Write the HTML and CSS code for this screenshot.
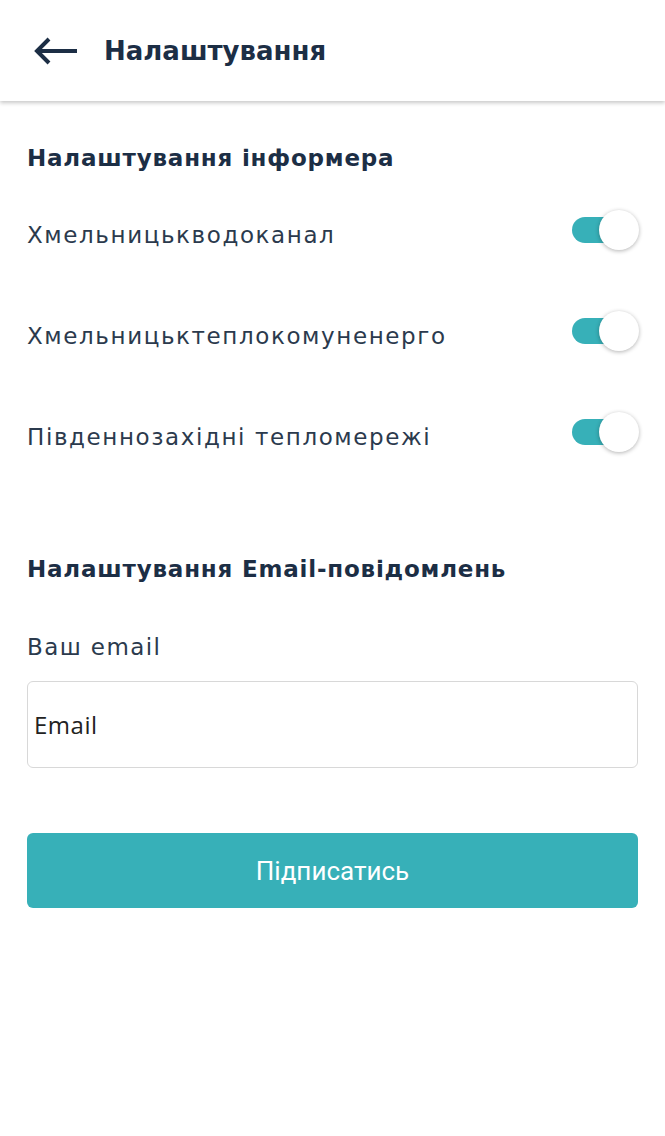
FILE: index.html
```html
<!DOCTYPE html>
<html lang="uk">
<head>
  <meta charset="UTF-8" />
  <meta name="viewport" content="width=device-width, initial-scale=1.0" />
  <title>Налаштування</title>
  <link rel="stylesheet" href="styles.css">
</head>
<body>
  <header class="topbar">
    <button class="back" aria-label="Назад">
      <svg width="44" height="28" viewBox="0 0 44 28">
        <path d="M43 14H4M15 2L3 14l12 12" fill="none" stroke="#1c2e45" stroke-width="4" stroke-linejoin="miter"/>
      </svg>
    </button>
    <h1>Налаштування</h1>
  </header>

  <main class="content">
    <h2>Налаштування інформера</h2>

    <div class="rows">
      <div class="row">
        <span>Хмельницькводоканал</span>
        <div class="switch on"><div class="thumb"></div></div>
      </div>
      <div class="row">
        <span>Хмельницьктеплокомуненерго</span>
        <div class="switch on"><div class="thumb"></div></div>
      </div>
      <div class="row">
        <span>Південнозахідні тепломережі</span>
        <div class="switch on"><div class="thumb"></div></div>
      </div>
    </div>

    <h2 class="email-title">Налаштування Email-повідомлень</h2>

    <label class="field-label">Ваш email</label>
    <div class="input">Email</div>

    <button class="subscribe">Підписатись</button>
  </main>
</body>
</html>
```

FILE: styles.css
```css
body {
  margin: 0;
  background: white;
  font-family: 'DejaVu Sans', sans-serif;
  color: #1c2e45;
}

.topbar {
  height: 101px;
  display: flex;
  align-items: center;
  padding: 0 0 0 34px;
  box-shadow: 0 2px 4px rgba(0, 0, 0, 0.22);
}

.back {
  background: none;
  border: none;
  padding: 0;
  margin-right: 26px;
  display: flex;
}

.topbar h1 {
  margin: 0;
  font-size: 26px;
  font-weight: bold;
}

.content {
  padding: 0 27px;
}

.content h2 {
  margin: 43px 0 0;
  font-size: 23px;
  font-weight: bold;
  letter-spacing: 0.8px;
  line-height: 28px;
}

.rows {
  margin-top: 10px;
}

.row {
  display: flex;
  justify-content: space-between;
  align-items: center;
  height: 101px;
  font-size: 23px;
  letter-spacing: 1.6px;
  color: #2b3a4d;
}

.row span {
  padding-top: 4px;
}

.switch {
  position: relative;
  width: 66px;
  height: 26px;
  margin-bottom: 6px;
  border-radius: 13px;
  background: #37b0b8;
}

.switch .thumb {
  position: absolute;
  right: -1px;
  top: -7px;
  width: 40px;
  height: 40px;
  border-radius: 50%;
  background: white;
  box-shadow: 0 1px 4px rgba(0, 0, 0, 0.3);
}

.content h2.email-title {
  margin-top: 70px;
}

.field-label {
  display: block;
  margin-top: 51px;
  font-size: 23px;
  letter-spacing: 1.4px;
  color: #2b3a4d;
}

.input {
  margin-top: 21px;
  height: 85px;
  border: 1px solid #d8d8d8;
  border-radius: 6px;
  display: flex;
  align-items: center;
  padding: 0 6px;
  font-family: 'Open Sans', sans-serif;
  font-size: 24px;
  letter-spacing: 0.5px;
  color: #222;
}

.subscribe {
  display: block;
  width: 100%;
  margin-top: 65px;
  height: 75px;
  border: none;
  border-radius: 6px;
  background: #37b0b8;
  color: white;
  font-family: Roboto, sans-serif;
  font-size: 26px;
}
```
